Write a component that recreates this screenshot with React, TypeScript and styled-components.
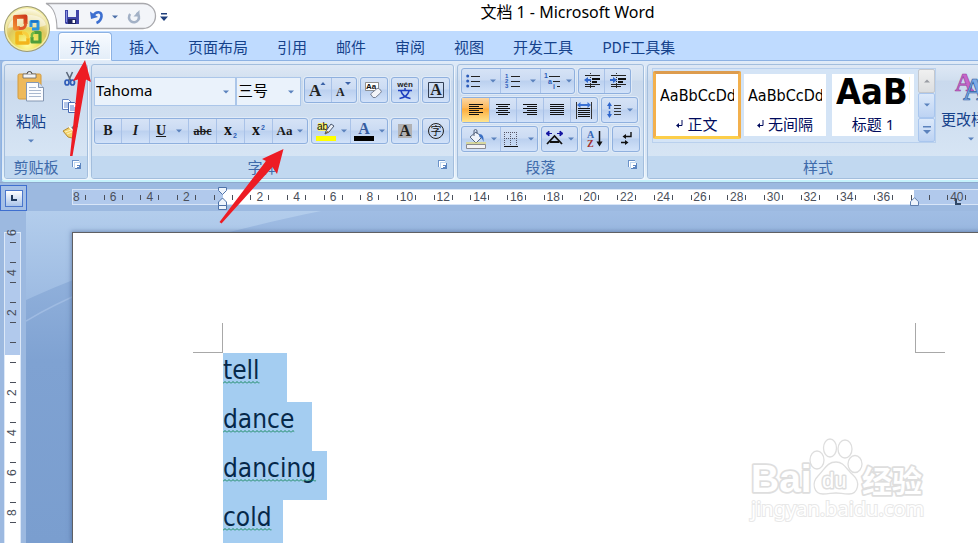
import React from "react";
import styled, { createGlobalStyle, css } from "styled-components";

const UI = `"Noto Sans", "Noto Sans CJK SC", sans-serif`;
const CJK = `"Noto Sans CJK SC", sans-serif`;
const DOC = `"DejaVu Sans Condensed", "Noto Sans", sans-serif`;
const SERIF = `"Liberation Serif", "Noto Sans CJK SC", serif`;

const Global = createGlobalStyle`
  * { box-sizing: border-box; }
  html, body, #root { height: 100%; }
  body { margin: 0; overflow: hidden; font-family: ${UI}; font-size: 15px; color: #15428b; }
  button, select { font: inherit; color: inherit; }
  svg { display: block; flex: none; overflow: visible; }
`;

const Window = styled.div`
  position: relative;
  display: flex;
  flex-direction: column;
  height: 100vh;
  overflow: hidden;
  background: #9cb9e0;
`;

/* ---------- title bar ---------- */
const TitleBar = styled.header`
  display: flex;
  height: 31px;
  background: #fff;
`;
const QuickAccess = styled.div`
  position: relative;
  display: flex;
  align-items: center;
  width: 177px;
  padding: 2px 0 0 64px;
`;
const QuickShape = styled.svg`
  position: absolute;
  left: 44px;
  top: 2px;
`;
const QuickButton = styled.button<{ $w: number }>`
  position: relative;
  display: flex;
  align-items: center;
  justify-content: center;
  width: ${(p) => p.$w}px;
  height: 20px;
  padding: 0;
  border: 0;
  background: none;
`;
const Title = styled.h1`
  flex: 1;
  margin: 0;
  padding-right: 20px;
  font-size: 16px;
  line-height: 25px;
  font-weight: 400;
  text-align: center;
  color: #000;
`;
const OfficeButton = styled.button`
  position: absolute;
  left: 3px;
  top: 5px;
  z-index: 3;
  padding: 0;
  border: 0;
  background: none;
`;

/* ---------- tabs ---------- */
const Tabs = styled.nav`
  display: flex;
  gap: 5px;
  height: 30px;
  padding: 1px 0 0 58px;
  background: #bfdbff;
  border-bottom: 1px solid #8db2e3;
`;
const Tab = styled.button<{ $active?: boolean }>`
  flex: none;
  height: 29px;
  padding: 0 12px;
  border: 1px solid transparent;
  border-width: 1px 0;
  background: none;
  font-family: ${CJK};
  font-size: 15px;
  line-height: 25px;
  white-space: nowrap;
  ${(p) =>
    p.$active &&
    css`
      border: 1px solid #8db2e3;
      border-bottom-color: #e3edf8;
      border-radius: 4px 4px 0 0;
      padding: 0 11px;
      background: linear-gradient(#f8fbff, #e3edf8);
      box-shadow: inset 0 0 0 1px #fff;
    `}
`;

/* ---------- ribbon ---------- */
const Ribbon = styled.section`
  display: flex;
  gap: 3px;
  height: 121px;
  margin-left: 1px;
  padding: 3px 0 0 2px;
  border-left: 1px solid #8db2e3;
  border-radius: 4px 0 0 4px;
  background: linear-gradient(#e0ebf8, #c9daee 20px, #dbe8f7 100px, #e7f4fb);
  border-bottom: 2px solid #c4f1fb;
`;
const Group = styled.section<{ $w: number; $grow?: boolean }>`
  display: flex;
  flex-direction: column;
  flex: ${(p) => (p.$grow ? 1 : 0)} 0 ${(p) => p.$w}px;
  height: 115px;
  border: 1px solid #a3bedd;
  border-radius: 3px;
  overflow: hidden;
  background: linear-gradient(#dee8f5, #d1dfef 15px, #c9d9ed 16px, #dae8f6);
  box-shadow: 1px 1px 0 #f0f6fd;
`;
const GroupBody = styled.div<{ $pad: string; $gap: number; $row?: boolean }>`
  display: flex;
  flex-direction: ${(p) => (p.$row ? "row" : "column")};
  gap: ${(p) => p.$gap}px;
  flex: 1;
  padding: ${(p) => p.$pad};
`;
const GroupLabel = styled.footer`
  display: flex;
  align-items: center;
  height: 22px;
  padding: 0 5px;
  background: #c1d8f0;
  color: #3e6aaa;
  font-family: ${CJK};
  font-size: 15px;
  line-height: 20px;
  span {
    flex: 1;
    padding-right: 10px;
    text-align: center;
  }
`;
const LauncherButton = styled.button`
  align-self: flex-start;
  margin-top: 4px;
  padding: 0;
  border: 0;
  background: none;
`;
const Row = styled.div<{ $gap?: number }>`
  display: flex;
  gap: ${(p) => p.$gap ?? 3}px;
`;
const Combo = styled.label<{ $w: number }>`
  display: grid;
  grid-template-columns: 1fr 12px;
  align-items: center;
  width: ${(p) => p.$w}px;
  height: 29px;
  border: 1px solid #abc6e9;
  background: #eaf2fb;
  color: #000;
  select {
    grid-area: 1 / 1 / 2 / 3;
    width: 100%;
    height: 27px;
    padding: 0 0 3px 1px;
    border: 0;
    appearance: none;
    background: none;
    font-size: 15px;
  }
  svg {
    grid-area: 1 / 2;
    pointer-events: none;
  }
`;
const ButtonSet = styled.div`
  display: flex;
  height: 26px;
  border: 1px solid #8fb0de;
  border-radius: 3px;
  background: linear-gradient(#d6e3f6, #cbdbf3 11px, #bbd0ef 12px, #d2e2f9);
  box-shadow: 0 0 0 1px #dfeaf7;
`;
const Tool = styled.button<{ $w: number; $on?: boolean }>`
  display: flex;
  align-items: center;
  justify-content: center;
  gap: 5px;
  width: ${(p) => p.$w}px;
  height: 24px;
  padding: 0;
  border: 0;
  color: #1c1c1c;
  background: ${(p) => (p.$on ? "linear-gradient(#fbd6a4, #fdb859 10px, #fdac3c 11px, #ffe58f)" : "none")};
  & + & {
    border-left: 1px solid #a9c2e8;
  }
`;
const Letter = styled.span<{ $size?: number; $italic?: boolean; $line?: string }>`
  font-family: ${SERIF};
  font-size: ${(p) => p.$size ?? 14}px;
  line-height: 18px;
  font-weight: 700;
  font-style: ${(p) => (p.$italic ? "italic" : "normal")};
  text-decoration: ${(p) => p.$line ?? "none"};
`;

const LargeButton = styled.button<{ $w: number }>`
  display: flex;
  flex: none;
  flex-direction: column;
  align-items: center;
  width: ${(p) => p.$w}px;
  padding: 0;
  border: 0;
  background: none;
  font-family: ${CJK};
  font-size: 15px;
  line-height: 22px;
  white-space: nowrap;
  svg:first-child {
    margin-bottom: 7px;
  }
  svg:last-child {
    margin-top: 7px;
  }
`;
const IconColumn = styled.div`
  display: flex;
  flex-direction: column;
  gap: 8px;
`;
const BareButton = styled.button`
  width: 18px;
  height: 18px;
  padding: 0;
  border: 0;
  background: none;
`;

/* ---------- style gallery ---------- */
const Gallery = styled.div`
  display: flex;
  height: 75px;
  border: 1px solid #b9d0ed;
  background: #d4e4f6;
`;
const StyleTiles = styled.div`
  display: flex;
  align-items: flex-start;
  width: 265px;
  padding-top: 2px;
`;
const StyleTile = styled.button<{ $on?: boolean }>`
  display: flex;
  flex-direction: column;
  flex: none;
  width: 88px;
  height: 68px;
  padding: 1px 4px;
  border: 3px solid;
  border-color: ${(p) => (p.$on ? "#dd9c4e #f3b04c #fcce4a" : "transparent")};
  border-radius: 2px;
  background: #fff;
  background-clip: ${(p) => (p.$on ? "border-box" : "padding-box")};
  color: #000a5c;
`;
const Sample = styled.span<{ $big?: boolean }>`
  display: block;
  width: 100%;
  height: 38px;
  overflow: hidden;
  white-space: nowrap;
  text-align: left;
  color: #000;
  font-family: ${DOC};
  font-size: ${(p) => (p.$big ? 36 : 16)}px;
  line-height: ${(p) => (p.$big ? 34 : 42)}px;
  font-weight: ${(p) => (p.$big ? 700 : 400)};
`;
const TileName = styled.span`
  display: flex;
  align-items: center;
  justify-content: center;
  gap: 4px;
  width: 100%;
  line-height: 22px;
  font-size: 15px;
`;
const ScrollColumn = styled.div`
  display: flex;
  flex-direction: column;
  width: 17px;
`;
const ScrollButton = styled.button<{ $off?: boolean }>`
  display: flex;
  align-items: center;
  justify-content: center;
  flex: 1;
  padding: 0;
  border: 1px solid ${(p) => (p.$off ? "#c4c8ce" : "#a9c6ee")};
  border-radius: 2px;
  background: ${(p) => (p.$off ? "linear-gradient(#f0f0f0, #dcdee0)" : "linear-gradient(#dce9fa, #bdd3f3)")};
`;

/* ---------- rulers ---------- */
const RulerRow = styled.div`
  display: grid;
  grid-template-columns: 72px 1fr;
  height: 29px;
  padding-top: 2px;
  border-top: 1px solid #8ea8cc;
`;
const TabStop = styled.button`
  display: grid;
  place-items: center;
  width: 27px;
  height: 26px;
  padding: 0;
  border: 1px solid #3f6fcf;
  background: #a5c0e6;
  span {
    display: grid;
    place-items: center;
    width: 18px;
    height: 17px;
    border: 1px solid #4a76cb;
    background: linear-gradient(#fff, #a9c4ea);
  }
`;
const HRuler = styled.div`
  position: relative;
  height: 16px;
  margin-top: 4px;
  border: 1px solid #d8e5f7;
  border-width: 1px 0 1px 1px;
  background: linear-gradient(90deg, #b1c9ec 150px, #fff 150px, #fff 841px, #b1c9ec 841px);
`;
const ScaleClip = styled.div`
  overflow: hidden;
`;
const HScale = styled.div`
  display: flex;
  width: 917px;
  height: 14px;
  margin-left: -15px;
`;
const HCell = styled.span`
  display: flex;
  flex: 1;
  align-items: center;
  justify-content: center;
  color: #4a4f5a;
  font-family: "Liberation Sans", sans-serif;
  font-size: 12px;
  line-height: 14px;
  &::before,
  &::after {
    content: "";
    width: 1px;
    height: 5px;
    background: #4a4f5a;
  }
  b {
    width: 17px;
    font-weight: 400;
    text-align: center;
  }
`;
const Marker = styled.svg<{ $x: number; $y: number }>`
  position: absolute;
  left: ${(p) => p.$x}px;
  top: ${(p) => p.$y}px;
`;
const Workspace = styled.main`
  position: relative;
  display: grid;
  grid-template-columns: 26px 1fr;
  flex: 1;
  min-height: 0;
  overflow: hidden;
`;
const VRuler = styled.div`
  width: 17px;
  margin: 21px 0 0 4px;
  border: 1px solid #dce8f8;
  border-bottom: 0;
  background: linear-gradient(#b1c9ec 122px, #fff 122px);
`;
const VScale = styled.div`
  display: flex;
  flex-direction: column;
  margin-top: -21px;
`;
const VCell = styled.span`
  display: flex;
  flex-direction: column;
  flex: none;
  align-items: center;
  justify-content: center;
  height: 40px;
  color: #4a4f5a;
  font-family: "Liberation Sans", sans-serif;
  font-size: 12px;
  line-height: 15px;
  &::before,
  &::after {
    content: "";
    width: 6px;
    height: 1px;
    background: #4a4f5a;
  }
  &:first-child::before {
    visibility: hidden;
  }
  b {
    height: 19px;
    font-weight: 400;
    text-align: center;
    writing-mode: vertical-rl;
    rotate: 180deg;
  }
`;

/* ---------- document ---------- */
const Desk = styled.div`
  position: relative;
  display: flex;
  overflow: hidden;
  background: linear-gradient(#a0bde4, #9ab8e0 20px, #7fa2d2 150px, #7a9ecf);
`;
const Swoosh = styled.svg`
  position: absolute;
  inset: 0;
`;
const Sheet = styled.article`
  position: relative;
  flex: none;
  width: 993px;
  margin: 21px 0 0 46px;
  border: 1px solid #5f6063;
  border-bottom: 0;
  background: #fff;
  box-shadow: -1px -1px 4px rgba(60, 90, 140, 0.5);
`;
const Crops = styled.div`
  display: grid;
  grid-template-columns: 150px 692px 1fr;
  align-items: end;
  height: 120px;
`;
const Crop = styled.i<{ $right?: boolean }>`
  grid-column: ${(p) => (p.$right ? 3 : 1)};
  justify-self: ${(p) => (p.$right ? "start" : "end")};
  width: 30px;
  height: 30px;
  border: solid #a8a8a8;
  border-width: ${(p) => (p.$right ? "0 0 1px 1px" : "0 1px 1px 0")};
`;
const Line = styled.p<{ $tail: number }>`
  width: fit-content;
  height: 49px;
  margin: 0 0 0 150px;
  padding-right: ${(p) => p.$tail}px;
  background: #a4cdf1;
  color: #06284a;
  font-family: ${DOC};
  font-size: 26px;
  line-height: 34px;
`;
const Word = styled.span`
  display: inline-grid;
`;
const Squiggle = styled.svg`
  width: 0;
  min-width: 100%;
  height: 3px;
  margin-top: -6px;
`;
const Watermark = styled.svg`
  position: absolute;
  right: 46px;
  bottom: 16px;
`;
const Arrows = styled.svg`
  position: absolute;
  left: 0;
  top: 0;
  z-index: 4;
  pointer-events: none;
`;

/* ---------- icons ---------- */
const Caret = ({ c = "#5b82bd", up }: { c?: string; up?: boolean }) => (
  <svg width="6" height="4" viewBox="0 0 6 4">
    <path d={up ? "M0 3.500H6L3 .5z" : "M0 .5H6L3 3.500z"} fill={c} />
  </svg>
);

const Launcher = ({ label }: { label: string }) => (
  <LauncherButton aria-label={label}>
    <svg width="10" height="10" viewBox="0 0 10 10" shapeRendering="crispEdges">
      <path d="M.5 7V.5H7" stroke="#6c93c9" fill="none" />
      <path d="M1.500 7V1.500H7" stroke="#fff" fill="none" />
      <path d="M3 3h6v6H3z" fill="#fff" />
      <path d="M8.500 3v5.500H3M5 7.500h3M7.500 5v3M5 5.500h2" stroke="#5b84bf" fill="none" />
    </svg>
  </LauncherButton>
);

const OfficeLogo = () => (
  <svg width="48" height="48" viewBox="0 0 48 48">
    <defs>
      <radialGradient id="orb" cx="50%" cy="88%" r="90%">
        <stop offset="0" stopColor="#fffca8" />
        <stop offset=".3" stopColor="#f0e25a" />
        <stop offset=".55" stopColor="#dcc75e" />
        <stop offset="1" stopColor="#fffef0" />
      </radialGradient>
      <linearGradient id="red" x1="0" x2="1" y1="1" y2="0">
        <stop offset="0" stopColor="#f08a2e" />
        <stop offset="1" stopColor="#cf3a1c" />
      </linearGradient>
    </defs>
    <circle cx="24" cy="24" r="23" fill="#9c9a72" />
    <circle cx="24" cy="24" r="22" fill="#f4eda6" />
    <circle cx="24" cy="24" r="20.500" fill="url(#orb)" />
    <path d="M5 23C8 6 40 6 43 20C33 25 16 20 5 23z" fill="#fff" opacity=".5" />
    <g fill="none" strokeLinejoin="round">
      <path d="M22.500 19V11.500L12 12V23.500L17 23" stroke="url(#red)" strokeWidth="4" />
      <path d="M16 23.500c5 .5 7-1.500 6.500-5.500" stroke="#e0582a" strokeWidth="3" />
      <path d="M28 22v-5.500h7V24h-6" stroke="#2b94de" strokeWidth="3" />
      <path d="M28 16.500h7" stroke="#1d6fc4" strokeWidth="2" />
      <path d="M20 28h-6v10h11v-5" stroke="#f2b51c" strokeWidth="3.500" />
      <path d="M19 27.500c4 0 6 2 6 6" stroke="#f8cf3f" strokeWidth="3" />
      <path d="M29 32v5h8v-9.500h-6" stroke="#4f9e3a" strokeWidth="3.200" />
      <path d="M32 27.500c-3 0-3.500 2-3 5" stroke="#74b944" strokeWidth="2.500" />
    </g>
  </svg>
);

const Save = () => (
  <svg width="14" height="14" viewBox="0 0 14 14">
    <path d="M0 0h14v14H1L0 13z" fill="#3f46a8" />
    <path d="M3 0h8v7H3z" fill="#e9f1fb" />
    <path d="M3 9h8v5H3z" fill="#1f2563" />
    <path d="M7.500 10H10v3H7.500z" fill="#fff" />
    <path d="M1 1h1v11H1z" fill="#8b93e0" />
  </svg>
);
const Undo = () => (
  <svg width="14" height="14" viewBox="0 0 14 14">
    <path d="M3 6C6 1 12 1 11.500 6.500C11 10 9 12 6.500 13" fill="none" stroke="#3d6fd0" strokeWidth="2.600" />
    <path d="M0 1.500L1 9l7-2z" fill="#3d6fd0" />
  </svg>
);
const Redo = () => (
  <svg width="14" height="14" viewBox="0 0 14 14">
    <path d="M9.500 3A5 5 0 1 1 3.200 4" fill="none" stroke="#a3b1c6" strokeWidth="2.600" />
    <path d="M12.500 0v6.500H6.500z" fill="#a3b1c6" />
  </svg>
);
const Paste = () => (
  <svg width="28" height="33" viewBox="0 0 28 33">
    <rect x="1" y="4" width="23" height="25" rx="1.500" fill="#eeb95a" stroke="#d29a3e" />
    <path d="M6 4h13v4H6z" fill="#f4f4f4" stroke="#666" strokeWidth=".8" />
    <path d="M10 4a2.500 2.500 0 0 1 5 0" fill="#ddd" stroke="#444" />
    <path d="M9.500 12.500h12l5 5V31h-17z" fill="#fbfcfe" stroke="#8497b3" />
    <path d="M21.500 12.500v5h5" fill="#d5dfee" stroke="#8497b3" />
    <path d="M12 17.500h7M12 20.500h12M12 23.500h12M12 26.500h12" stroke="#a9b8cf" />
  </svg>
);
const Cut = () => (
  <svg width="16" height="16" viewBox="0 0 16 16">
    <path d="M4.500 1l4.500 9M10.500 1L6.500 10" stroke="#5e6b7d" strokeWidth="1.600" />
    <g fill="none" stroke="#2f5cb8" strokeWidth="1.700">
      <ellipse cx="5" cy="11.500" rx="2" ry="2.500" />
      <ellipse cx="10.500" cy="11.500" rx="2" ry="2.500" />
    </g>
  </svg>
);
const Copy = () => (
  <svg width="18" height="15" viewBox="0 0 18 15">
    <path d="M.5 1.500h6l3 3v7h-9z" fill="#fff" stroke="#5f80c0" />
    <path d="M2 5h4M2 7h4M2 9h4" stroke="#6c8fd0" />
    <path d="M6.500 4.500h6l3 3v7h-9z" fill="#fff" stroke="#4468b2" />
    <path d="M8 8h4M8 10h6M8 12h6" stroke="#4f7bd0" />
  </svg>
);
const Brush = () => (
  <svg width="18" height="16" viewBox="0 0 18 16">
    <path d="M9 5l4-4 3 2-3 5z" fill="#6f6f77" />
    <path d="M1 8l7-4 6 6-4 5-4-1z" fill="#f3d36b" stroke="#b48a32" />
    <path d="M3 9l6-2M5 11l5-2" stroke="#fff2b8" />
    <path d="M7 3.500l7 7" stroke="#fff" strokeWidth="1.500" />
  </svg>
);
const GrowA = ({ down }: { down?: boolean }) => (
  <svg width="18" height="18" viewBox="0 0 18 18">
    <text x={down ? 1 : 0} y="15" fontFamily="Liberation Serif" fontWeight="700" fontSize={down ? 12 : 17} fill="#222">
      A
    </text>
    <path d={down ? "M10 1h6l-3 3z" : "M11.500 4h5L14 1z"} fill="#3b62a8" />
  </svg>
);
const ClearFormat = () => (
  <svg width="18" height="18" viewBox="0 0 18 18">
    <path d="M.5 1.500h13v8H.5z" fill="#fff" stroke="#777" strokeWidth=".8" />
    <text x="1" y="8" fontFamily="Liberation Sans" fontWeight="700" fontSize="8" fill="#111">
      Aa
    </text>
    <path d="M5.500 13l6-5a2 2 0 0 1 3 0l1 1a2 2 0 0 1 0 3l-5 4.500H8z" fill="#f3f4f8" stroke="#767f92" />
  </svg>
);
const Phonetic = () => (
  <svg width="18" height="20" viewBox="0 0 18 20">
    <text x="9" y="7" textAnchor="middle" fontFamily="Liberation Sans" fontWeight="700" fontSize="8" fill="#222">
      wén
    </text>
    <path d="M9 8v2.500M2 10.500h14M5 11c1 4 4 6.500 9.500 7.500M13 11c-1 4-4 6.500-9.500 7.500" fill="none" stroke="#1f3fc0" strokeWidth="1.500" />
  </svg>
);
const BoxedA = ({ shade }: { shade?: boolean }) => (
  <svg width="18" height="18" viewBox="0 0 18 18">
    {shade ? <path d="M2 2h14v14H2z" fill="#b1b1b3" /> : <path d="M1.500 1.500h15v15h-15z" fill="none" stroke="#333f55" />}
    <text x="9" y="14" textAnchor="middle" fontFamily="Liberation Serif" fontWeight="700" fontSize="16" fill="#222">
      A
    </text>
  </svg>
);
const CircleChar = () => (
  <svg width="18" height="18" viewBox="0 0 18 18">
    <circle cx="9" cy="9" r="7.500" fill="none" stroke="#222" />
    <text x="9" y="13" textAnchor="middle" fontFamily="Noto Sans CJK SC" fontSize="11" fill="#111">
      字
    </text>
  </svg>
);
const Script = ({ sup }: { sup?: boolean }) => (
  <svg width="14" height="18" viewBox="0 0 14 18">
    <text x="0" y="13" fontFamily="Liberation Serif" fontWeight="700" fontSize="16" fill="#111">
      x
    </text>
    <text x="9" y={sup ? 8 : 16} fontFamily="Liberation Sans" fontWeight="700" fontSize="7" fill="#2f5fb5">
      2
    </text>
  </svg>
);
const Highlight = () => (
  <svg width="20" height="20" viewBox="0 0 20 20">
    <path d="M2 2h9v8H2z" fill="#f6f072" />
    <text x="1" y="9" fontFamily="Liberation Sans" fontSize="10" fill="#111">
      ab
    </text>
    <path d="M10 10l5-7 3 2-5 6-4 2z" fill="#eceff5" stroke="#4c5a72" />
    <path d="M9 13l2-3 2 1z" fill="#8b6a2b" />
    <path d="M0 15h20v5H0z" fill="#ff0" />
  </svg>
);
const FontColor = () => (
  <svg width="20" height="20" viewBox="0 0 20 20">
    <text x="10" y="13" textAnchor="middle" fontFamily="Liberation Serif" fontWeight="700" fontSize="16" fill="#375ca0">
      A
    </text>
    <path d="M0 15h20v5H0z" fill="#000" />
  </svg>
);
const Bullets = () => (
  <svg width="14" height="14" viewBox="0 0 14 14">
    <g fill="#2b5bb8">
      <circle cx="1.700" cy="2" r="1.500" />
      <circle cx="1.700" cy="7" r="1.500" />
      <circle cx="1.700" cy="12" r="1.500" />
    </g>
    <path d="M5 2.500h9M5 7.500h9M5 12.500h9" stroke="#222" shapeRendering="crispEdges" />
  </svg>
);
const Numbers = () => (
  <svg width="15" height="16" viewBox="0 0 15 16">
    <g fill="#2b5bb8" fontFamily="Liberation Sans" fontWeight="700" fontSize="6">
      <text x="0" y="5">1</text>
      <text x="0" y="10">2</text>
      <text x="0" y="15">3</text>
    </g>
    <path d="M6 3.500h9M6 8.500h9M6 13.500h9" stroke="#222" shapeRendering="crispEdges" />
  </svg>
);
const MultiLevel = () => (
  <svg width="17" height="16" viewBox="0 0 17 16">
    <g fill="#2b5bb8" fontFamily="Liberation Sans" fontWeight="700" fontSize="7">
      <text x="0" y="5">1</text>
      <text x="4" y="11">a</text>
      <text x="9" y="16">i</text>
    </g>
    <path d="M5 3.500h11M9 8.500h7M13 13.500h3" stroke="#222" shapeRendering="crispEdges" />
  </svg>
);
const Indent = ({ inward }: { inward?: boolean }) => (
  <svg width="16" height="16" viewBox="0 0 16 16" shapeRendering="crispEdges">
    <path d="M1 2.500h15M8 5h8M8 8h5M1 11.500h15M1 13.500h10" stroke="#222" />
    <path d="M8 5.500h8M8 8.500h5" stroke="#111" strokeWidth="2" />
    <path d="M6.500 0v16" stroke="#333" strokeDasharray="1 1" />
    <path d={inward ? "M0 6h3V4l4 3-4 3V8H0z" : "M7 6H4V4L0 7l4 3V8h3z"} fill="#2f66cc" shapeRendering="auto" />
  </svg>
);
const Align = ({ rows }: { rows: [number, number][] }) => (
  <svg width="14" height="12" viewBox="0 0 14 12" shapeRendering="crispEdges">
    {rows.map(([x, w], i) => (
      <rect key={i} x={x} y={i * 2} width={w} height="1" fill="#111" />
    ))}
  </svg>
);
const Distribute = () => (
  <svg width="16" height="17" viewBox="0 0 16 17" shapeRendering="crispEdges">
    <path d="M.5 0v17M15.500 0v17" stroke="#333" />
    <path d="M2 6.500h12M2 8.500h12M2 10.500h12M2 12.500h12M2 14.500h12" stroke="#111" />
    <path d="M1 3l3.500-3v2h7V0L15 3l-3.500 3V4h-7v2z" fill="#3b72d4" shapeRendering="auto" />
  </svg>
);
const LineSpacing = () => (
  <svg width="15" height="16" viewBox="0 0 15 16">
    <path d="M2.500 0L5 4H3.300v3H1.700V4H0zM2.500 16L5 12H3.300V9H1.700v3H0z" fill="#2f66cc" />
    <path d="M7 3.500h7M7 6.500h7M7 9.500h7M7 12.500h7" stroke="#333" shapeRendering="crispEdges" />
  </svg>
);
const Bucket = () => (
  <svg width="20" height="20" viewBox="0 0 20 20">
    <path d="M4 8l6-5 6 5-6 6z" fill="#eff3fa" stroke="#56657e" />
    <path d="M8 7V2a1.500 1.500 0 0 1 3 0v3" fill="none" stroke="#56657e" />
    <path d="M13 5c4 0 5 3 4.500 8-1-3-2-4-4-5z" fill="#3a6fc4" />
    <path d="M0 14h20" stroke="#ead84e" />
    <path d="M.5 15.500h19v4H.5z" fill="#f2f2f4" stroke="#8a8a90" />
  </svg>
);
const Borders = () => (
  <svg width="14" height="15" viewBox="0 0 14 15" shapeRendering="crispEdges">
    <path d="M.5 0v13M6.500 0v13M12.500 0v13M0 .5h14M0 6.500h14" stroke="#556" strokeDasharray="1 1" />
    <path d="M0 14.500h14" stroke="#111" />
  </svg>
);
const TextScale = () => (
  <svg width="17" height="16" viewBox="0 0 17 16">
    <path d="M1 13L8.500 5L16 13M4 11h9" fill="none" stroke="#111" strokeWidth="1.800" />
    <path d="M0 2.500L3 0v5zM3 2.500h3M17 2.500L14 0v5zM14 2.500h-3" fill="#1414a0" stroke="#1414a0" />
  </svg>
);
const SortAZ = () => (
  <svg width="16" height="18" viewBox="0 0 16 18">
    <text x="0" y="8" fontFamily="Liberation Serif" fontWeight="700" fontSize="10" fill="#3567b4">A</text>
    <text x="0" y="17" fontFamily="Liberation Serif" fontWeight="700" fontSize="10" fill="#a33030">Z</text>
    <path d="M12.500 1v11" stroke="#111" strokeWidth="1.500" />
    <path d="M9.500 11.500h6l-3 5z" fill="#111" />
  </svg>
);
const Marks = () => (
  <svg width="12" height="14" viewBox="0 0 12 14">
    <path d="M11 0v4.500H5M1 10.500h5" fill="none" stroke="#111" strokeWidth="1.400" />
    <path d="M2.500 4.500L6 2v5zM8.500 10.500L5 8v5z" fill="#111" />
  </svg>
);
const ReturnMark = () => (
  <svg width="7" height="8" viewBox="0 0 7 8">
    <path d="M6 0v5.500H2" fill="none" stroke="#000a5c" />
    <path d="M0 5.500L3 3v5z" fill="#000a5c" />
  </svg>
);
const StylesIcon = () => (
  <svg width="34" height="33" viewBox="0 0 34 33">
    <g fontFamily="Liberation Serif" fontWeight="700">
      <text x="1" y="23" fontSize="26" fill="#c765c9" stroke="#94429b" strokeWidth=".6">A</text>
      <text x="9" y="32" fontSize="32" fill="#7caae6" stroke="#32619f" strokeWidth=".7">A</text>
    </g>
  </svg>
);

const left: [number, number][] = [[0, 14], [0, 10], [0, 14], [0, 10], [0, 14], [0, 10]];
const center: [number, number][] = [[0, 14], [2, 10], [0, 14], [2, 10], [0, 14], [2, 10]];
const right: [number, number][] = [[0, 14], [4, 10], [0, 14], [4, 10], [0, 14], [4, 10]];
const full: [number, number][] = [[0, 14], [0, 14], [0, 14], [0, 14], [0, 14], [0, 14]];

const tabs = ["开始", "插入", "页面布局", "引用", "邮件", "审阅", "视图", "开发工具", "PDF工具集"];
const hMarks = Array.from({ length: 25 }, (_, i) => {
  const n = Math.abs(i * 2 - 8);
  return n === 0 || n === 38 ? "" : String(n);
});
const vMarks = ["6", "4", "2", "", "2", "4", "6", "8"];
const words = [
  { text: "tell", tail: 27 },
  { text: "dance", tail: 18 },
  { text: "dancing", tail: 11 },
  { text: "cold", tail: 11 },
];

export default function App() {
  return (
    <Window>
      <Global />
      <OfficeButton aria-label="Office">
        <OfficeLogo />
      </OfficeButton>

      <TitleBar>
        <QuickAccess>
          <QuickShape width="114" height="28" viewBox="0 0 114 28">
            <path
              d="M2 1.500H99a12.500 12.500 0 0 1 0 25H13C13 16 10 5 2 1.500z"
              fill="#f3f5f9"
              stroke="#a9a9ad"
              strokeWidth="1.300"
            />
          </QuickShape>
          <QuickButton $w={16} aria-label="保存"><Save /></QuickButton>
          <QuickButton $w={36} aria-label="撤销"><Undo /></QuickButton>
          <QuickButton $w={1} aria-label="撤销选项"><Caret c="#4a6ea8" /></QuickButton>
          <QuickButton $w={38} aria-label="恢复"><Redo /></QuickButton>
          <QuickButton $w={26} aria-label="自定义快速访问工具栏">
            <svg width="8" height="8" viewBox="0 0 8 8">
              <path d="M1 0h6v1.500H1zM0 3.500h8L4 8z" fill="#1f3f7c" />
            </svg>
          </QuickButton>
        </QuickAccess>
        <Title>文档 1 - Microsoft Word</Title>
      </TitleBar>

      <Tabs>
        {tabs.map((t, i) => (
          <Tab key={t} $active={i === 0}>{t}</Tab>
        ))}
      </Tabs>

      <Ribbon>
        <Group $w={84}>
          <GroupBody $row $pad="5px 0 0 5px" $gap={10}>
            <LargeButton $w={42}>
              <Paste />
              <span>粘贴</span>
              <Caret />
            </LargeButton>
            <IconColumn>
              <BareButton aria-label="剪切"><Cut /></BareButton>
              <BareButton aria-label="复制"><Copy /></BareButton>
              <BareButton aria-label="格式刷"><Brush /></BareButton>
            </IconColumn>
          </GroupBody>
          <GroupLabel><span>剪贴板</span><Launcher label="剪贴板选项" /></GroupLabel>
        </Group>

        <Group $w={363}>
          <GroupBody $pad="12px 0 0 2px" $gap={12}>
            <Row>
              <Row $gap={0}>
                <Combo $w={142}>
                  <select aria-label="字体"><option>Tahoma</option></select>
                  <Caret />
                </Combo>
                <Combo $w={65}>
                  <select aria-label="字号"><option>三号</option></select>
                  <Caret />
                </Combo>
              </Row>
              <ButtonSet>
                <Tool $w={26} aria-label="增大字体"><GrowA /></Tool>
                <Tool $w={25} aria-label="缩小字体"><GrowA down /></Tool>
              </ButtonSet>
              <ButtonSet><Tool $w={26} aria-label="清除格式"><ClearFormat /></Tool></ButtonSet>
              <ButtonSet><Tool $w={26} aria-label="拼音指南"><Phonetic /></Tool></ButtonSet>
              <ButtonSet><Tool $w={26} aria-label="字符边框"><BoxedA /></Tool></ButtonSet>
            </Row>
            <Row>
              <ButtonSet>
                <Tool $w={26}><Letter>B</Letter></Tool>
                <Tool $w={28}><Letter $italic>I</Letter></Tool>
                <Tool $w={39}><Letter $line="underline">U</Letter><span /><Caret /></Tool>
                <Tool $w={28}><Letter $size={12} $line="line-through">abc</Letter></Tool>
                <Tool $w={28} aria-label="下标"><Script /></Tool>
                <Tool $w={28} aria-label="上标"><Script sup /></Tool>
                <Tool $w={35}><Letter $size={13}>Aa</Letter><Caret /></Tool>
              </ButtonSet>
              <ButtonSet>
                <Tool $w={38} aria-label="突出显示"><Highlight /><Caret /></Tool>
                <Tool $w={37} aria-label="字体颜色"><FontColor /><Caret /></Tool>
              </ButtonSet>
              <ButtonSet><Tool $w={26} aria-label="字符底纹"><BoxedA shade /></Tool></ButtonSet>
              <ButtonSet><Tool $w={26} aria-label="带圈字符"><CircleChar /></Tool></ButtonSet>
            </Row>
          </GroupBody>
          <GroupLabel><span>字体</span><Launcher label="字体选项" /></GroupLabel>
        </Group>

        <Group $w={187}>
          <GroupBody $pad="3px 0 0 3px" $gap={3}>
            <Row>
              <ButtonSet>
                <Tool $w={38} aria-label="项目符号"><Bullets /><span /><Caret /></Tool>
                <Tool $w={40} aria-label="编号"><Numbers /><span /><Caret /></Tool>
                <Tool $w={34} aria-label="多级列表"><MultiLevel /><Caret /></Tool>
              </ButtonSet>
              <ButtonSet>
                <Tool $w={25} aria-label="减少缩进量"><Indent /></Tool>
                <Tool $w={26} aria-label="增加缩进量"><Indent inward /></Tool>
              </ButtonSet>
            </Row>
            <Row>
              <ButtonSet>
                <Tool $w={27} $on aria-label="左对齐"><Align rows={left} /></Tool>
                <Tool $w={27} aria-label="居中"><Align rows={center} /></Tool>
                <Tool $w={27} aria-label="右对齐"><Align rows={right} /></Tool>
                <Tool $w={27} aria-label="两端对齐"><Align rows={full} /></Tool>
                <Tool $w={27} aria-label="分散对齐"><Distribute /></Tool>
              </ButtonSet>
              <ButtonSet><Tool $w={35} aria-label="行距"><LineSpacing /><Caret /></Tool></ButtonSet>
            </Row>
            <Row>
              <ButtonSet>
                <Tool $w={38} aria-label="底纹"><Bucket /><Caret /></Tool>
                <Tool $w={37} aria-label="边框"><Borders /><span /><Caret /></Tool>
              </ButtonSet>
              <ButtonSet><Tool $w={35} aria-label="中文版式"><TextScale /><Caret /></Tool></ButtonSet>
              <ButtonSet><Tool $w={26} aria-label="排序"><SortAZ /></Tool></ButtonSet>
              <ButtonSet><Tool $w={26} aria-label="显示编辑标记"><Marks /></Tool></ButtonSet>
            </Row>
          </GroupBody>
          <GroupLabel><span>段落</span><Launcher label="段落选项" /></GroupLabel>
        </Group>

        <Group $w={362} $grow>
          <GroupBody $row $pad="3px 0 0 4px" $gap={2}>
            <Gallery>
              <StyleTiles>
                <StyleTile $on>
                  <Sample>AaBbCcDd</Sample>
                  <TileName><ReturnMark />正文</TileName>
                </StyleTile>
                <StyleTile>
                  <Sample>AaBbCcDd</Sample>
                  <TileName><ReturnMark />无间隔</TileName>
                </StyleTile>
                <StyleTile>
                  <Sample $big>AaBb</Sample>
                  <TileName>标题 1</TileName>
                </StyleTile>
              </StyleTiles>
              <ScrollColumn>
                <ScrollButton $off aria-label="上一行"><Caret up c="#9a9da3" /></ScrollButton>
                <ScrollButton aria-label="下一行"><Caret /></ScrollButton>
                <ScrollButton aria-label="其他">
                  <svg width="8" height="8" viewBox="0 0 8 8">
                    <path d="M0 0h8v1.500H0zM0 4h8L4 8z" fill="#5b82bd" />
                  </svg>
                </ScrollButton>
              </ScrollColumn>
            </Gallery>
            <LargeButton $w={66}>
              <StylesIcon />
              <span>更改样式</span>
              <Caret />
            </LargeButton>
          </GroupBody>
          <GroupLabel><span>样式</span><Launcher label="样式选项" /></GroupLabel>
        </Group>
      </Ribbon>

      <RulerRow>
        <TabStop aria-label="制表符">
          <span>
            <svg width="6" height="6" viewBox="0 0 6 6"><path d="M1 0v5h5" fill="none" stroke="#1f3a5f" strokeWidth="2" /></svg>
          </span>
        </TabStop>
        <HRuler>
          <ScaleClip>
            <HScale>
              {hMarks.map((m, i) => (
                <HCell key={i}><b>{m}</b></HCell>
              ))}
            </HScale>
          </ScaleClip>
          <Marker $x={145} $y={-3} width="10" height="26" viewBox="0 0 10 26">
            <path d="M.5 .5h8v3l-4 4-4-4zM4.500 11l4 4v3.500h-8V15zM.5 18.500h8v4h-8z" fill="#eef4fc" stroke="#4f72a8" />
          </Marker>
          <Marker $x={837} $y={7} width="10" height="10" viewBox="0 0 10 10">
            <path d="M4.500 .7l4 4V8.500h-8V4.700z" fill="#eef4fc" stroke="#5f7fae" />
          </Marker>
          <Marker $x={882} $y={9} width="7" height="7" viewBox="0 0 7 7">
            <path d="M1 0v5h5" fill="none" stroke="#2f4766" strokeWidth="2" />
          </Marker>
        </HRuler>
      </RulerRow>

      <Workspace>
        <VRuler>
          <VScale>
            {vMarks.map((m, i) => (
              <VCell key={i}><b>{m}</b></VCell>
            ))}
          </VScale>
        </VRuler>
        <Desk>
          <Swoosh width="320" height="140" viewBox="0 0 320 140">
            <defs>
              <linearGradient id="sky" x1="0" x2="0" y1="0" y2="1">
                <stop offset="0" stopColor="#b3cdec" />
                <stop offset="1" stopColor="#9dbbe2" />
              </linearGradient>
            </defs>
            <path d="M0 0H295C180 24 80 52 0 89z" fill="url(#sky)" />
            <path d="M0 110C20 98 36 90 60 80" fill="none" stroke="#9fbbe2" strokeWidth="1.500" />
          </Swoosh>
          <Sheet>
            <Crops>
              <Crop />
              <Crop $right />
            </Crops>
            {words.map((w, i) => (
              <Line key={w.text} $tail={w.tail}>
                <Word>
                  {w.text}
                  <Squiggle>
                    <defs>
                      <pattern id={`wave${i}`} width="4" height="3" patternUnits="userSpaceOnUse">
                        <path d="M0 2.500L2 .5L4 2.500" fill="none" stroke="#12855a" />
                      </pattern>
                    </defs>
                    <rect width="100%" height="3" fill={`url(#wave${i})`} />
                  </Squiggle>
                </Word>
              </Line>
            ))}
          </Sheet>
        </Desk>
      </Workspace>

      <Watermark width="184" height="92" viewBox="0 0 184 92">
        <g fill="#fff" stroke="#dedede" strokeWidth="1.300">
          <ellipse cx="69" cy="25" rx="7" ry="9" />
          <ellipse cx="82" cy="13" rx="6.500" ry="9" />
          <ellipse cx="97" cy="14" rx="7" ry="9" />
          <ellipse cx="107" cy="29" rx="7" ry="8.500" />
          <path d="M88 27c8 0 10 7 17 13 8 7 5 19-4 19-7 0-8-1-13-1s-7 1-13 1c-9 0-12-11-5-18s9-14 18-14z" />
          <g paintOrder="stroke" strokeWidth="3.500" strokeLinejoin="round" fontWeight="700">
            <text x="3" y="57" fontFamily="Liberation Sans" fontSize="39">Bai</text>
            <text x="74" y="53" fontFamily="Liberation Sans" fontSize="22" fontWeight="400" strokeWidth="3">du</text>
            <text x="114" y="57" fontFamily="Noto Sans CJK SC" fontSize="30">经验</text>
          </g>
          <text x="3" y="81" fontFamily="Noto Sans" fontSize="20" stroke="#e8e8e8" strokeWidth="2" paintOrder="stroke">jingyan.baidu.com</text>
        </g>
      </Watermark>

      <Arrows width="300" height="230" viewBox="0 0 300 230" fill="#ed1c24">
        <path d="M85 60L91 82L86 79.500L72.500 156H70L78 79.500L73 81z" />
        <path d="M283.500 149L277 174L272.500 167L221.500 223.500L219.500 222L266 161L262 159z" />
      </Arrows>
    </Window>
  );
}
